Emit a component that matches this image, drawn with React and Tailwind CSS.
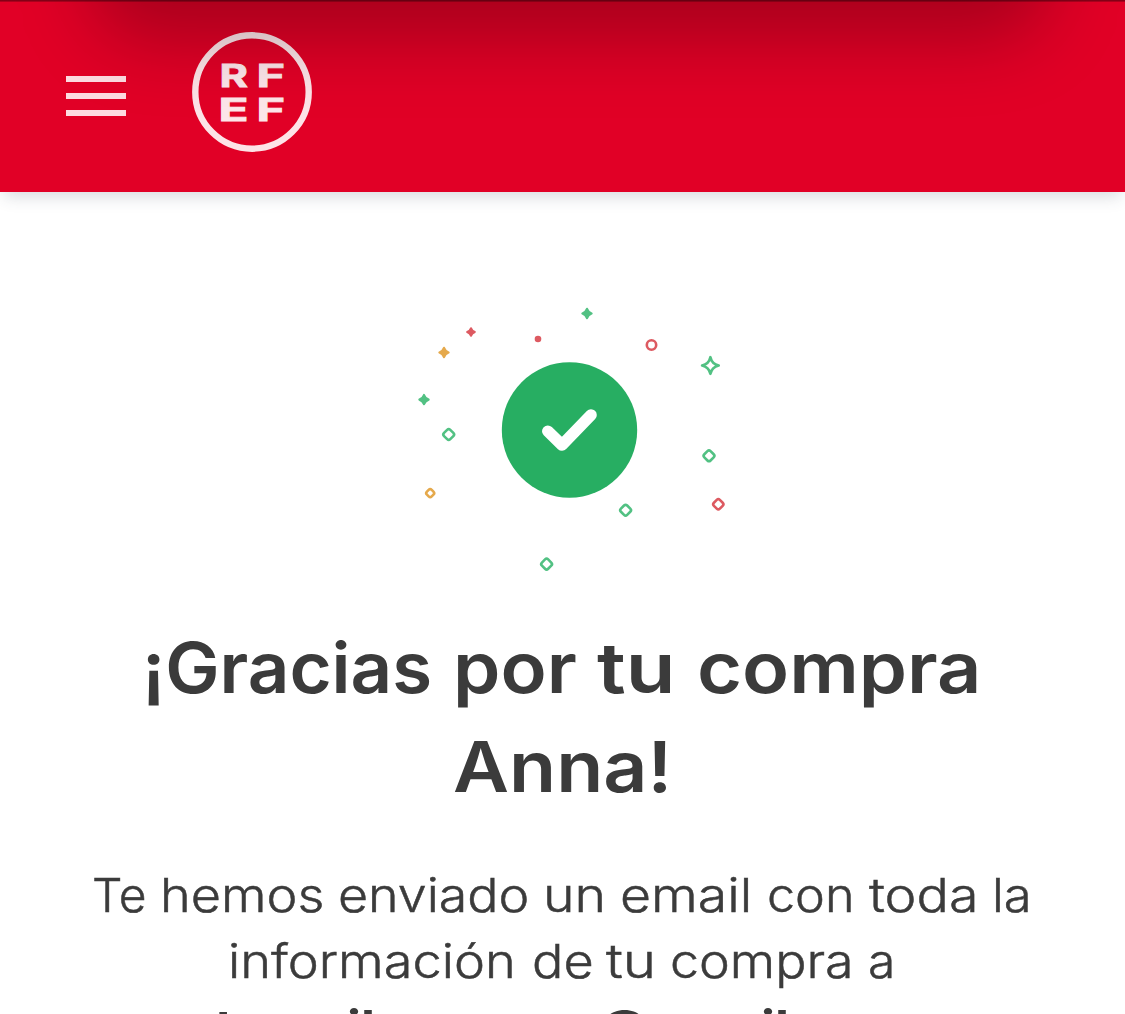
import React from 'react';

// Each word carries its slot width and its horizontal stretch
const TITLE_TOP = [
  ['¡Gracias', 'w-[311px] scale-x-[1.036]'],
  ['por', 'w-[144px] scale-x-[1.085]'],
  ['tu', 'w-[99.5px] scale-x-[1.16]'],
  ['compra', 'w-[286px] scale-x-[1.105]'],
];

const TITLE_BOTTOM = [['Anna!', 'w-[220px] scale-x-[1.1]']];

const BODY_TOP = [
  ['Te', 'w-[68.5px] scale-x-[1.02]'],
  ['hemos', 'w-[178px] scale-x-[1.11]'],
  ['enviado', 'w-[204.5px] scale-x-[1.105]'],
  ['un', 'w-[77px] scale-x-[1.14]'],
  ['email', 'w-[147px] scale-x-[1.14]'],
  ['con', 'w-[102px] scale-x-[1.07]'],
  ['toda', 'w-[123px] scale-x-[1.145]'],
  ['la', 'w-[40px] scale-x-[1.08]'],
];

const BODY_BOTTOM = [
  ['información', 'w-[304px] scale-x-[1.113]'],
  ['de', 'w-[74px] scale-x-[1.11]'],
  ['tu', 'w-[64.5px] scale-x-[1.2]'],
  ['compra', 'w-[198px] scale-x-[1.105]'],
  ['a', 'w-[30px] scale-x-[1.06]'],
];

const EMAIL = [
  ['t', 'w-[20px] scale-x-[1.1]'],
  ['uma', 'w-[112px] scale-x-[1.1]'],
  ['il', 'w-[30px] scale-x-[1.1]'],
  ['persona', 'w-[223px] scale-x-[1.15]'],
  ['@', 'w-[52px] scale-x-[1.02]'],
  ['gma', 'w-[109px] scale-x-[1.09]'],
  ['il', 'w-[30px] scale-x-[1.1]'],
  ['.com', 'w-[116px] scale-x-[1]'],
];

const GREEN = '#52c183';
const RED = '#dd5a61';
const ORANGE = '#e5a94c';

function Line({ words, className }) {
  return (
    <span className={`flex whitespace-nowrap ${className}`}>
      {words.map(([text, size], i) => (
        <span key={i} className={`block shrink-0 origin-left ${size}`}>{text}</span>
      ))}
    </span>
  );
}

function Diamond({ x, y, s = 8.8, color }) {
  return (
    <rect
      x={x - s / 2}
      y={y - s / 2}
      width={s}
      height={s}
      rx="2.2"
      fill="none"
      stroke={color}
      strokeWidth="2.6"
      transform={`rotate(45 ${x} ${y})`}
    />
  );
}

function Star({ x, y, s = 1, color }) {
  return (
    <path
      d="M0 -4.6Q1.2 -1.2 4.6 0Q1.2 1.2 0 4.6Q-1.2 1.2 -4.6 0Q-1.2 -1.2 0 -4.6Z"
      fill={color}
      stroke={color}
      strokeWidth="2.2"
      strokeLinejoin="round"
      transform={`translate(${x} ${y}) scale(${s})`}
    />
  );
}

function Logo() {
  return (
    <svg className="size-[122px]" viewBox="0 0 122 122" aria-label="RFEF">
      <circle cx="61" cy="61" r="56.7" fill="none" stroke="#fde3e7" strokeWidth="6.4" />
      <g fill="#fde6ea" stroke="#fde6ea" strokeWidth="0.8" className="font-['Inter',sans-serif] text-[31px] font-bold">
        <text x="28.5" y="56" textLength="28.5" lengthAdjust="spacingAndGlyphs">R</text>
        <text x="65.5" y="56" textLength="28.5" lengthAdjust="spacingAndGlyphs">F</text>
        <text x="27.5" y="90" textLength="30" lengthAdjust="spacingAndGlyphs">E</text>
        <text x="65.5" y="90" textLength="28.5" lengthAdjust="spacingAndGlyphs">F</text>
      </g>
    </svg>
  );
}

export default function App() {
  return (
    <div className="h-[1014px] w-[1125px] overflow-hidden bg-white font-['Inter',sans-serif] text-[#3b3b3b]">
      {/* Header */}
      <header className="relative h-[192px] bg-[#e10026] shadow-[0_8px_16px_-4px_rgba(50,60,80,0.2)]">
        <div className="flex items-start pt-[31px] pl-[66px]">
          <button type="button" aria-label="Menú" className="mt-[45px] flex w-[60px] flex-col gap-[11.5px]">
            <span className="h-[5.5px] bg-[#fddbe1]" />
            <span className="h-[5.5px] bg-[#fddbe1]" />
            <span className="h-[5.5px] bg-[#fddbe1]" />
          </button>
          <div className="ml-[65px]">
            <Logo />
          </div>
        </div>

        {/* Shade falling from the top edge */}
        <div className="pointer-events-none absolute inset-0 overflow-hidden">
          <div className="absolute -top-[260px] right-[75px] left-[90px] h-[300px] rounded-[60px] bg-black/25 blur-[36px]" />
          <div className="absolute inset-x-0 top-0 h-[2px] bg-gradient-to-b from-black/50 to-black/15" />
        </div>
      </header>

      <main>
        {/* Confetti badge */}
        <svg className="mt-[108px] ml-[410px] block h-[280px] w-[320px]" viewBox="410 300 320 280">
          <circle cx="569.5" cy="430" r="67.7" fill="#27ae62" />
          <path
            d="M547.8 431.2L562 445L591 415"
            fill="none"
            stroke="#fff"
            strokeWidth="11.6"
            strokeLinecap="round"
            strokeLinejoin="round"
          />
          <Star x={471} y={332} s={0.85} color={RED} />
          <Star x={444} y={352.5} color={ORANGE} />
          <Star x={424} y={399.6} color={GREEN} />
          <Star x={587} y={313.5} color={GREEN} />
          <circle cx="538" cy="339" r="3.3" fill={RED} />
          <circle cx="651.5" cy="345" r="4.7" fill="none" stroke={RED} strokeWidth="2.6" />
          <path
            d="M710.4 357.2Q711.9 364 718.7 365.5Q711.9 367 710.4 373.8Q708.9 367 702.1 365.5Q708.9 364 710.4 357.2Z"
            fill="none"
            stroke={GREEN}
            strokeWidth="2.7"
            strokeLinejoin="round"
          />
          <Diamond x={448.7} y={434.5} color={GREEN} />
          <Diamond x={430.2} y={493.1} s={6.8} color={ORANGE} />
          <Diamond x={546.6} y={564.1} color={GREEN} />
          <Diamond x={709} y={455.8} color={GREEN} />
          <Diamond x={625.6} y={510.2} color={GREEN} />
          <Diamond x={718.3} y={504.3} s={8.4} color={RED} />
        </svg>

        <h1 className="mt-[38px] text-[70px] leading-[99px] font-semibold">
          <Line words={TITLE_TOP} className="pl-[142px]" />
          <Line words={TITLE_BOTTOM} className="pl-[452.5px]" />
        </h1>

        <p className="mt-[46px] text-[47px] leading-[66px] font-[350]">
          <Line words={BODY_TOP} className="pl-[91.5px] [-webkit-text-stroke:0.5px_#3b3b3b]" />
          <Line words={BODY_BOTTOM} className="pl-[227.5px] [-webkit-text-stroke:0.5px_#3b3b3b]" />
          <Line words={EMAIL} className="pl-[215px] font-bold" />
        </p>
      </main>
    </div>
  );
}
